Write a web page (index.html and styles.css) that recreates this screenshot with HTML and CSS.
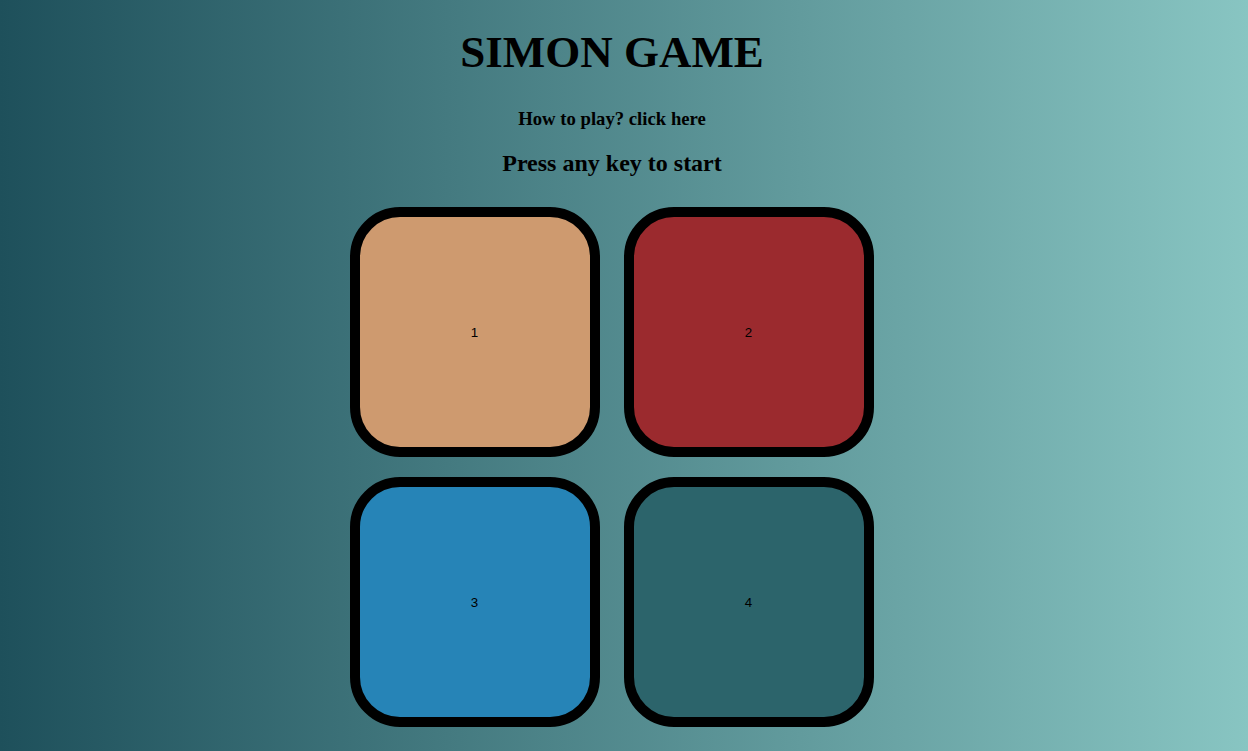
FILE: index.html
```html
<!DOCTYPE html>
<html>
<head>
<meta charset="utf-8">
<title>Simon Game</title>
<link rel="stylesheet" href="styles.css">
</head>
<body>
<div class="page">
  <h1 class="title">SIMON GAME</h1>
  <h3 class="help">How to play? click here</h3>
  <h2 class="status">Press any key to start</h2>
  <div class="board">
    <div class="pad pad-tan">1</div>
    <div class="pad pad-red">2</div>
    <div class="pad pad-blue">3</div>
    <div class="pad pad-teal">4</div>
  </div>
</div>
</body>
</html>
```
FILE: styles.css
```css
html, body {
  margin: 0;
  height: 100%;
}
body {
  background: linear-gradient(to right, #1e505b, #88c5c2);
  font-family: "Liberation Serif", "Times New Roman", serif;
  color: #000;
  overflow: hidden;
}
.page {
  width: 1224px;
  text-align: center;
}
.title {
  margin: 26px 0 0;
  font-size: 45px;
  line-height: 52px;
  font-weight: bold;
}
.help {
  margin: 30px 0 0;
  font-size: 18.72px;
  line-height: 22px;
  font-weight: bold;
}
.status {
  margin: 19px 0 0;
  font-size: 24px;
  line-height: 28px;
  font-weight: bold;
}
.board {
  margin-top: 30px;
  display: grid;
  grid-template-columns: 250px 250px;
  grid-auto-rows: 250px;
  column-gap: 24px;
  row-gap: 20px;
  justify-content: center;
}
.pad {
  box-sizing: border-box;
  border: 10px solid #000;
  border-radius: 50px;
  display: flex;
  align-items: center;
  justify-content: center;
  padding-right: 1px;
  font-family: "Liberation Sans", Arial, sans-serif;
  font-size: 13.33px;
  color: #000;
}
.pad-tan { background: #ce9a6f; }
.pad-red { background: #9b2a2e; }
.pad-blue { background: #2684b7; }
.pad-teal { background: #2c646b; }
```
